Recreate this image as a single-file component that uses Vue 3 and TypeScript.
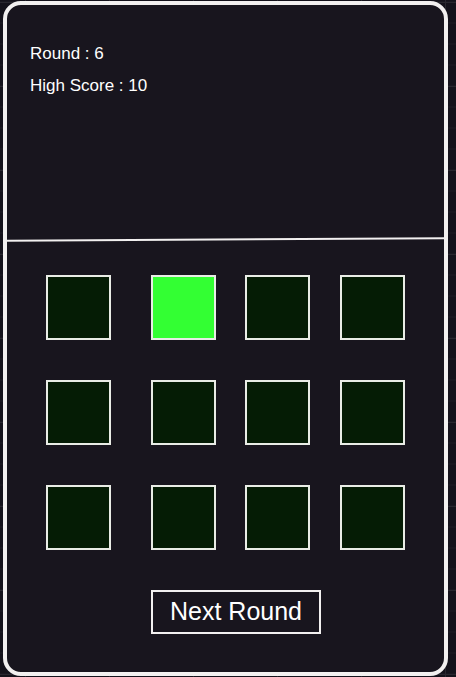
<script setup lang="ts">
import { ref } from 'vue'

const tileCount = 12
const round = ref(6)
const highScore = ref(10)
const litTile = ref(1)

function nextRound(): void {
  round.value += 1
  highScore.value = Math.max(highScore.value, round.value)
  litTile.value = Math.floor(Math.random() * tileCount)
}
</script>

<template>
  <div class="page">
    <main class="game">
      <section class="scores">
        <p>Round : {{ round }}</p>
        <p>High Score : {{ highScore }}</p>
      </section>
      <svg class="divider" viewBox="0 0 437 5" preserveAspectRatio="none" aria-hidden="true">
        <line x1="0" y1="3.7" x2="437" y2="1.2" />
      </svg>
      <section class="tiles">
        <button
          v-for="n in tileCount"
          :key="n"
          type="button"
          class="tile"
          :class="{ lit: n - 1 === litTile }"
          :aria-label="`Tile ${n}`"
        ></button>
      </section>
      <button type="button" class="next" @click="nextRound">Next Round</button>
    </main>
  </div>
</template>

<style>
body {
  background: #14121b;
}
</style>

<style scoped>
.page {
  box-sizing: border-box;
  min-height: 100vh;
  padding: 1px 8px 1px 3px;
  display: flex;
  font-family: "Liberation Sans", Arial, sans-serif;
  color: #ffffff;
  background-color: #14121b;
  background-image:
    linear-gradient(#29272f 1px, transparent 1px),
    linear-gradient(90deg, #29272f 1px, transparent 1px),
    linear-gradient(#191720 2px, transparent 2px);
  background-size: 84px 84px, 84px 84px, 21px 21px;
  background-position: 0 2px, 25px 0, 0 1px;
}

.game {
  flex: 1;
  box-sizing: border-box;
  display: flex;
  flex-direction: column;
  border: 4px solid #f2f0f0;
  border-radius: 18px;
  background: #18151e;
}

.scores {
  box-sizing: border-box;
  min-height: 232px;
  padding: 33px 23px;
  font-size: 17px;
  line-height: 32px;
}

.scores p {
  margin: 0;
}

.divider {
  display: block;
  width: 100%;
  height: 5px;
}

.divider line {
  stroke: #f2f0f0;
  stroke-width: 2;
}

.tiles {
  display: grid;
  grid-template-columns: 75px repeat(3, 65px);
  justify-content: space-between;
  row-gap: 40px;
  padding: 33px 39px 40px;
}

.tile {
  box-sizing: border-box;
  width: 65px;
  height: 65px;
  padding: 0;
  border: 2px solid #e9ece6;
  background: #051c05;
}

.tile.lit {
  background: #33ff33;
}

.next {
  box-sizing: border-box;
  width: 170px;
  height: 44px;
  margin-left: 144px;
  padding: 0 0 2px;
  border: 2px solid #f2f0f0;
  background: transparent;
  color: inherit;
  font-family: inherit;
  font-size: 25px;
}
</style>
